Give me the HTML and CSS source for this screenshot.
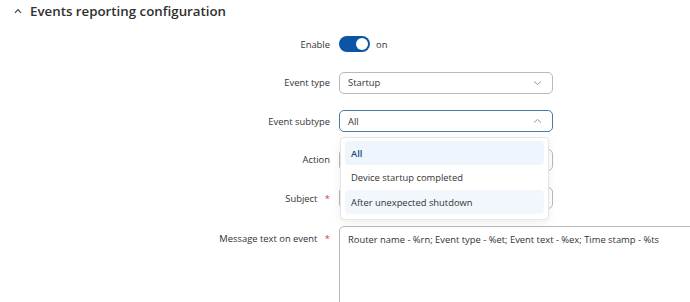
FILE: index.html
```html
<!DOCTYPE html>
<html>
<head>
<meta charset="utf-8">
<link rel="stylesheet" href="styles.css">
</head>
<body>
<section class="panel">
  <h2 class="panel-title">
    <svg class="title-chevron" width="8" height="6" viewBox="0 0 8 6"><path d="M1 4.8 L4 1.6 L7 4.8" fill="none" stroke="#444" stroke-width="1.2"/></svg>
    Events reporting configuration
  </h2>
  <div class="form">
    <div class="label">Enable</div>
    <div class="control toggle-row">
      <span class="toggle"><span class="knob"></span></span>
      <span class="toggle-text">on</span>
    </div>

    <div class="label">Event type</div>
    <div class="control">
      <div class="select">
        <span>Startup</span>
        <svg class="chev" width="9" height="6" viewBox="0 0 9 6"><path d="M1 1.5 L4.5 4.5 L8 1.5" fill="none" stroke="#999" stroke-width="1"/></svg>
      </div>
    </div>

    <div class="label">Event subtype</div>
    <div class="control dropdown-host">
      <div class="select select-open">
        <span>All</span>
        <svg class="chev" width="9" height="6" viewBox="0 0 9 6"><path d="M1 4.5 L4.5 1.5 L8 4.5" fill="none" stroke="#999" stroke-width="1"/></svg>
      </div>
      <ul class="menu">
        <li class="item item-active">All</li>
        <li class="item">Device startup completed</li>
        <li class="item item-hover">After unexpected shutdown</li>
      </ul>
    </div>

    <div class="label">Action</div>
    <div class="control"><div class="select"></div></div>

    <div class="label">Subject <span class="req">*</span></div>
    <div class="control"><div class="select"></div></div>

    <div class="label label-top">Message text on event <span class="req">*</span></div>
    <div class="control">
      <div class="textarea">Router name - %rn; Event type - %et; Event text - %ex; Time stamp - %ts</div>
    </div>
  </div>
</section>
</body>
</html>
```
FILE: styles.css
```css
html, body {
  margin: 0;
  padding: 0;
  background: #fff;
  overflow: hidden;
}
body {
  width: 690px;
  height: 302px;
  font-family: "Open Sans", "Noto Sans", sans-serif;
  color: #333;
}
.panel {
  padding: 2px 0 0 14px;
}
.panel-title {
  margin: 0;
  display: flex;
  align-items: center;
  gap: 8px;
  font-size: 13.3px;
  font-weight: 600;
  color: #2f2f2f;
  height: 18px;
}
.title-chevron {
  flex: none;
}
.form {
  display: grid;
  grid-template-columns: 316px 360px;
  column-gap: 9px;
  row-gap: 16.6px;
  grid-auto-rows: 22px;
  margin-top: 13px;
  font-size: 9.4px;
}
.label {
  text-align: right;
  align-self: center;
  color: #333;
  white-space: nowrap;
}
.label-top {
  align-self: start;
  padding-top: 6px;
}
.req {
  color: #d0453c;
  margin-left: 5px;
}
.control {
  display: flex;
  align-items: center;
  width: 214px;
}
.toggle-row {
  gap: 6px;
}
.toggle {
  width: 31px;
  height: 16px;
  border-radius: 8px;
  background: #0c55a6;
  display: flex;
  align-items: center;
  justify-content: flex-end;
  padding: 0 2px;
  box-sizing: border-box;
}
.knob {
  width: 12px;
  height: 12px;
  border-radius: 50%;
  background: #fff;
}
.toggle-text {
  color: #333;
}
.select {
  box-sizing: border-box;
  width: 214px;
  height: 22px;
  border: 1px solid #b9b9b9;
  border-radius: 5px;
  display: flex;
  align-items: center;
  justify-content: space-between;
  padding: 0 10px 0 8px;
  background: #fff;
}
.select-open {
  border-color: #4a7aa6;
}
.dropdown-host {
  position: relative;
}
.menu {
  position: absolute;
  top: 27px;
  left: 1px;
  width: 209px;
  box-sizing: border-box;
  margin: 0;
  padding: 3px 4px 5px;
  list-style: none;
  background: #fff;
  border: 1px solid #e6e6e6;
  border-radius: 4px;
  box-shadow: 0 2px 8px rgba(0,0,0,0.08);
  z-index: 5;
  display: flex;
  flex-direction: column;
  gap: 0.5px;
}
.item {
  height: 24px;
  display: flex;
  align-items: center;
  padding: 0 6px;
  border-radius: 4px;
  color: #333;
}
.item-active {
  background: #eef5fc;
  color: #1b4a78;
  font-weight: 600;
}
.item-hover {
  background: #f1f7fd;
}
.textarea {
  box-sizing: border-box;
  width: 360px;
  height: 90px;
  flex: none;
  align-self: flex-start;
  border: 1px solid #b9b9b9;
  border-radius: 5px;
  padding: 6px 8px;
  color: #333;
  white-space: nowrap;
}
```
